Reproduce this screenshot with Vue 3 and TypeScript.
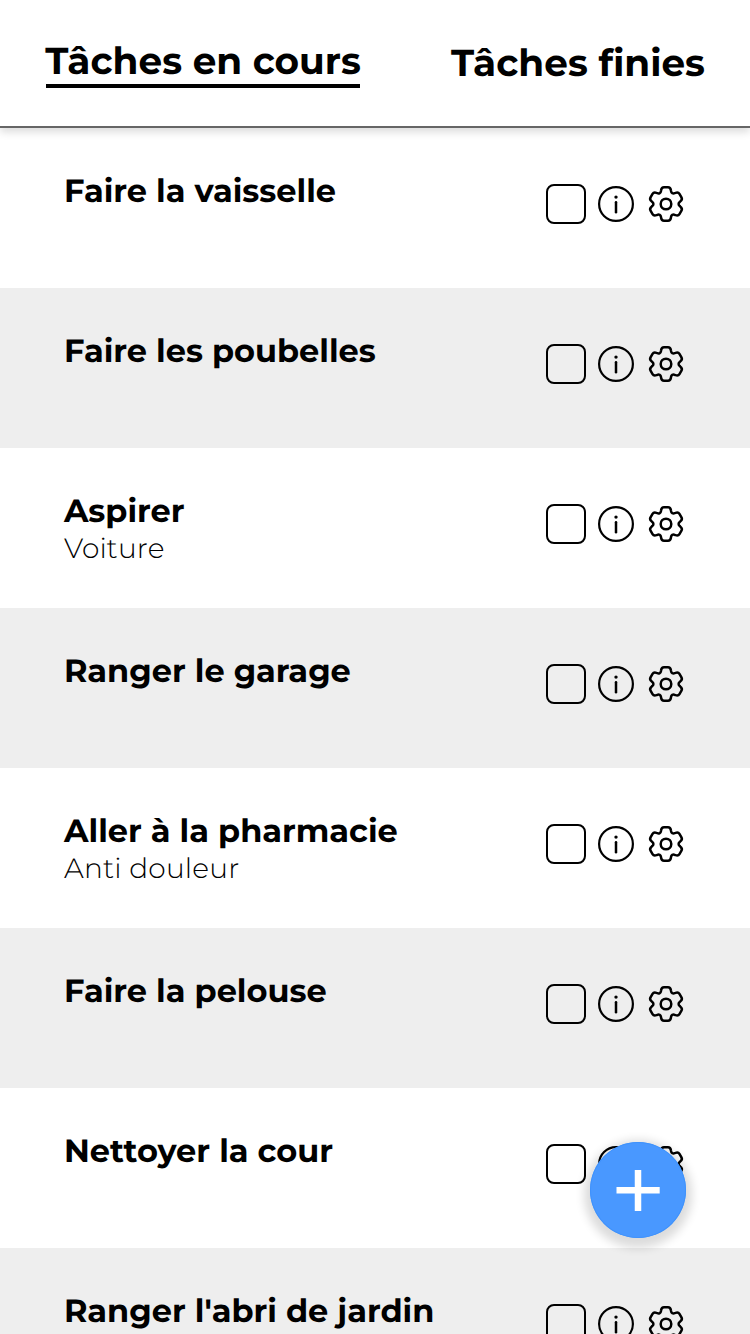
<script setup lang="ts">
interface Task {
  title: string
  note?: string
}

const tasks: Task[] = [
  { title: 'Faire la vaisselle' },
  { title: 'Faire les poubelles' },
  { title: 'Aspirer', note: 'Voiture' },
  { title: 'Ranger le garage' },
  { title: 'Aller à la pharmacie', note: 'Anti douleur' },
  { title: 'Faire la pelouse' },
  { title: 'Nettoyer la cour' },
  { title: "Ranger l'abri de jardin" },
]

// One tooth of the gear, pointing up; repeated every 60 degrees.
const tooth: [number, number][] = [
  [-4.8, -11.8], [-5.2, -12.6], [-4.9, -13.8],
  [-4.6, -15.8], [-3.6, -16.7], [-2, -16.7],
  [-0.7, -16.7], [0.7, -16.7], [2, -16.7],
  [3.6, -16.7], [4.6, -15.8], [4.9, -13.8],
  [5.2, -12.6], [4.8, -11.8], [6.3, -10.9],
]

function buildGear(): string {
  let d = 'M-6.3 -10.9'
  for (let k = 0; k < 6; k++) {
    const a = (k * Math.PI) / 3
    const pts = tooth.map(([x, y]) =>
      `${(x * Math.cos(a) - y * Math.sin(a)).toFixed(2)} ${(x * Math.sin(a) + y * Math.cos(a)).toFixed(2)}`)
    for (let i = 0; i < pts.length; i += 3) d += `C${pts[i]} ${pts[i + 1]} ${pts[i + 2]}`
  }
  return d + 'Z'
}

const gearPath = buildGear()
</script>

<template>
  <div class="screen">
    <header class="tabs">
      <div class="tab active">Tâches en cours</div>
      <div class="tab done">Tâches finies</div>
    </header>
    <main class="list">
      <section v-for="task in tasks" :key="task.title" class="row">
        <div class="text">
          <div class="title">{{ task.title }}</div>
          <div v-if="task.note" class="note">{{ task.note }}</div>
        </div>
        <div class="actions">
          <span class="check"></span>
          <svg class="info" viewBox="-20 -20 40 40" width="40" height="40">
            <circle r="16.9" fill="none" stroke="#000" stroke-width="2.2" />
            <circle cy="-6.9" r="1.7" />
            <path d="M0 -1.7V8.3" stroke="#000" stroke-width="2.5" stroke-linecap="round" />
          </svg>
          <svg class="gear" viewBox="-20 -20 40 40" width="40" height="40">
            <path :d="gearPath" fill="none" stroke="#000" stroke-width="2.5" stroke-linejoin="round" />
            <circle r="5.3" fill="none" stroke="#000" stroke-width="2.5" />
          </svg>
        </div>
      </section>
    </main>
    <button class="fab" aria-label="Ajouter">
      <svg viewBox="0 0 96 96" width="96" height="96">
        <path d="M26.5 48.3H69.7M48 28V69" fill="none" stroke="#fff" stroke-width="6.5" />
      </svg>
    </button>
  </div>
</template>

<style>
html, body { margin: 0; background: #fff; overflow: hidden; }
</style>

<style scoped>
.screen {
  position: relative;
  width: 750px;
  height: 1334px;
  overflow: hidden;
  color: #000;
  background: #fff;
  font-family: Montserrat, Inter, "Liberation Sans", sans-serif;
  text-rendering: geometricPrecision;
}
.tabs {
  position: relative;
  z-index: 1;
  box-sizing: border-box;
  height: 128px;
  padding: 38px 45px 0 46px;
  display: flex;
  justify-content: space-between;
  align-items: flex-start;
  border-bottom: 2px solid #666;
  background: #fff;
  box-shadow: 0 4px 8px rgba(0, 0, 0, 0.14);
}
.tab {
  box-sizing: border-box;
  height: 50px;
  line-height: 48px;
  font-size: 37.44px;
  font-weight: 700;
  white-space: nowrap;
}
.active {
  width: 314px;
  border-bottom: 4px solid #000;
  text-indent: -0.8px;
}
.done {
  width: 254px;
  padding-top: 2px;
}
.row {
  box-sizing: border-box;
  height: 160px;
  padding: 44px 64px 0 64px;
  display: flex;
  justify-content: space-between;
  align-items: flex-start;
}
.row:nth-child(even) { background: #eee; }
.title {
  height: 39px;
  line-height: 40px;
  font-size: 32px;
  font-weight: 700;
  white-space: nowrap;
}
.note {
  height: 36px;
  line-height: 36px;
  font-size: 28px;
  letter-spacing: 0.2px;
  font-weight: 300;
  white-space: nowrap;
}
.actions {
  display: flex;
  align-items: center;
  gap: 10px;
  padding-top: 12px;
}
.check {
  box-sizing: border-box;
  width: 40px;
  height: 40px;
  border: 2px solid #000;
  border-radius: 8px;
}
.fab {
  position: absolute;
  left: 590px;
  top: 1142px;
  z-index: 2;
  width: 96px;
  height: 96px;
  padding: 0;
  border: 0;
  border-radius: 50%;
  background: #4998ff;
  box-shadow: inset 0 0 0 1px #3f92fc, 0 4px 10px 6px rgba(0, 0, 0, 0.14);
}
svg { display: block; }
</style>
